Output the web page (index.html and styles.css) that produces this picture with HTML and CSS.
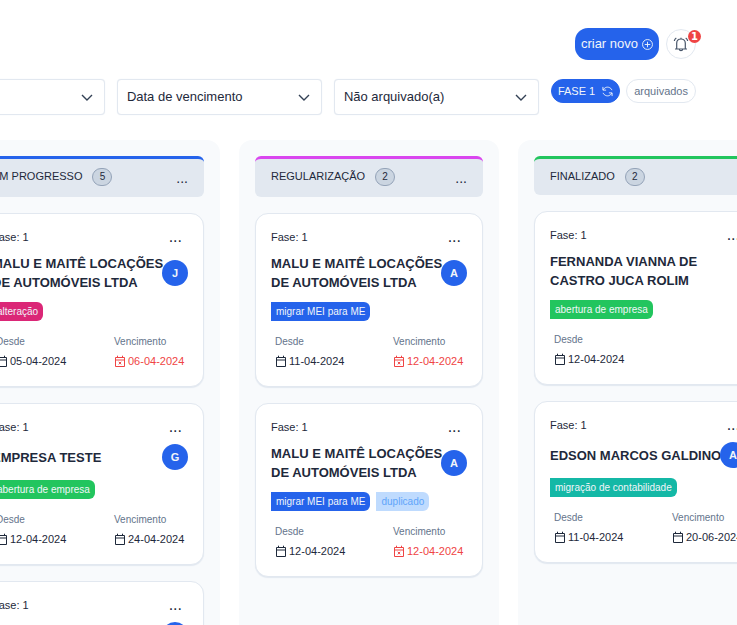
FILE: index.html
```html
<!DOCTYPE html>
<html lang="pt-BR">
<head>
<meta charset="utf-8">
<title>Processos</title>
<link rel="stylesheet" href="styles.css">
</head>
<body>
<svg class="sprite" aria-hidden="true">
  <symbol id="calendar" viewBox="0 0 12 12"><path d="M1.500 2.500h9v9h-9zM1.500 5h9M3.500 .7v2M8.500 .7v2" fill="none" stroke="currentColor"/></symbol>
  <symbol id="calendar-x" viewBox="0 0 12 12"><path d="M1.500 2.500h9v9h-9zM1.500 5h9M3.500 .7v2M8.500 .7v2M4.800 6.800l2.400 2.600M7.200 6.800l-2.400 2.600" fill="none" stroke="currentColor"/></symbol>
</svg>
<div class="page">
  <header class="topbar">
    <button class="create" type="button">criar novo
      <svg width="11" height="11" viewBox="0 0 12 12" fill="none" stroke="currentColor"><circle cx="6" cy="6" r="5.400"/><path d="M6 3v6M3 6h6"/></svg>
    </button>
    <button class="bell" type="button" aria-label="Notificações">
      <svg width="16" height="16" viewBox="0 0 16 16" fill="none" stroke="currentColor" stroke-width="1.200"><path d="M2 13h12M3.700 13V7.300C3.700 4.700 5.500 3 8 3s4.300 1.700 4.300 4.300V13M6.300 13.200c.2 2 3.200 2 3.400 0M8 1.700V3M1.300 5c.2-1.200.9-2.200 2-2.900M14.700 5c-.2-1.200-.9-2.200-2-2.900"/></svg>
      <span class="badge">1</span>
    </button>
  </header>

  <div class="filters">
    <div class="field"><select aria-label="Status"><option></option></select><svg class="chevron" width="12" height="8" viewBox="0 0 12 8"><path d="M1 1l5 5 5-5"/></svg></div>
    <div class="field"><select aria-label="Data de vencimento"><option>Data de vencimento</option></select><svg class="chevron" width="12" height="8" viewBox="0 0 12 8"><path d="M1 1l5 5 5-5"/></svg></div>
    <div class="field"><select aria-label="Arquivamento"><option>Não arquivado(a)</option></select><svg class="chevron" width="12" height="8" viewBox="0 0 12 8"><path d="M1 1l5 5 5-5"/></svg></div>
    <div class="pills">
      <button class="pill active" type="button">FASE 1
        <svg width="11" height="11" viewBox="0 0 12 12" fill="none" stroke="currentColor"><path d="M1 1v3.500h3.500M1.400 4.200C2.500 1.500 6.500 0 9.500 2.600c.6.500 1 1.100 1.300 1.900M11 11V7.500H7.500M10.600 7.800C9.500 10.500 5.500 12 2.500 9.400c-.6-.5-1-1.100-1.300-1.900"/></svg>
      </button>
      <button class="pill" type="button">arquivados</button>
    </div>
  </div>

  <main class="board">
    <section class="column">
      <div class="column-head blue"><h2>EM PROGRESSO</h2><span class="count">5</span><button class="more" type="button">...</button></div>
      <article class="card">
        <div class="card-top"><span>Fase: 1</span><button class="more" type="button">...</button></div>
        <div class="card-title"><h3>MALU E MAITÊ LOCAÇÕES<br>DE AUTOMÓVEIS LTDA</h3><span class="avatar">J</span></div>
        <div class="tags"><span class="tag pink">alteração</span></div>
        <dl class="dates">
          <div><dt>Desde</dt><dd><svg class="icon"><use href="#calendar"/></svg>05-04-2024</dd></div>
          <div><dt>Vencimento</dt><dd class="late"><svg class="icon"><use href="#calendar-x"/></svg>06-04-2024</dd></div>
        </dl>
      </article>
      <article class="card">
        <div class="card-top"><span>Fase: 1</span><button class="more" type="button">...</button></div>
        <div class="card-title"><h3>EMPRESA TESTE</h3><span class="avatar">G</span></div>
        <div class="tags"><span class="tag green">abertura de empresa</span></div>
        <dl class="dates">
          <div><dt>Desde</dt><dd><svg class="icon"><use href="#calendar"/></svg>12-04-2024</dd></div>
          <div><dt>Vencimento</dt><dd><svg class="icon"><use href="#calendar"/></svg>24-04-2024</dd></div>
        </dl>
      </article>
      <article class="card">
        <div class="card-top"><span>Fase: 1</span><button class="more" type="button">...</button></div>
        <div class="card-title"><h3></h3><span class="avatar"></span></div>
      </article>
    </section>

    <section class="column">
      <div class="column-head fuchsia"><h2>REGULARIZAÇÃO</h2><span class="count">2</span><button class="more" type="button">...</button></div>
      <article class="card">
        <div class="card-top"><span>Fase: 1</span><button class="more" type="button">...</button></div>
        <div class="card-title"><h3>MALU E MAITÊ LOCAÇÕES<br>DE AUTOMÓVEIS LTDA</h3><span class="avatar">A</span></div>
        <div class="tags"><span class="tag royal">migrar MEI para ME</span></div>
        <dl class="dates">
          <div><dt>Desde</dt><dd><svg class="icon"><use href="#calendar"/></svg>11-04-2024</dd></div>
          <div><dt>Vencimento</dt><dd class="late"><svg class="icon"><use href="#calendar-x"/></svg>12-04-2024</dd></div>
        </dl>
      </article>
      <article class="card">
        <div class="card-top"><span>Fase: 1</span><button class="more" type="button">...</button></div>
        <div class="card-title"><h3>MALU E MAITÊ LOCAÇÕES<br>DE AUTOMÓVEIS LTDA</h3><span class="avatar">A</span></div>
        <div class="tags"><span class="tag royal">migrar MEI para ME</span><span class="tag sky">duplicado</span></div>
        <dl class="dates">
          <div><dt>Desde</dt><dd><svg class="icon"><use href="#calendar"/></svg>12-04-2024</dd></div>
          <div><dt>Vencimento</dt><dd class="late"><svg class="icon"><use href="#calendar-x"/></svg>12-04-2024</dd></div>
        </dl>
      </article>
    </section>

    <section class="column">
      <div class="column-head emerald"><h2>FINALIZADO</h2><span class="count">2</span></div>
      <article class="card">
        <div class="card-top"><span>Fase: 1</span><button class="more" type="button">...</button></div>
        <div class="card-title"><h3>FERNANDA VIANNA DE<br>CASTRO JUCA ROLIM</h3></div>
        <div class="tags"><span class="tag green">abertura de empresa</span></div>
        <dl class="dates">
          <div><dt>Desde</dt><dd><svg class="icon"><use href="#calendar"/></svg>12-04-2024</dd></div>
        </dl>
      </article>
      <article class="card">
        <div class="card-top"><span>Fase: 1</span><button class="more" type="button">...</button></div>
        <div class="card-title"><h3>EDSON MARCOS GALDINO</h3><span class="avatar">A</span></div>
        <div class="tags"><span class="tag teal">migração de contabilidade</span></div>
        <dl class="dates">
          <div><dt>Desde</dt><dd><svg class="icon"><use href="#calendar"/></svg>11-04-2024</dd></div>
          <div><dt>Vencimento</dt><dd><svg class="icon"><use href="#calendar"/></svg>20-06-2024</dd></div>
        </dl>
      </article>
    </section>
  </main>
</div>
</body>
</html>
```
FILE: styles.css
```css
* { box-sizing: border-box; }

body {
  margin: 0;
  background: #fff;
  color: #1e293b;
  font: 11px/16px "Liberation Sans", Arial, sans-serif;
}

h2, h3, dl, dt, dd { margin: 0; font: inherit; }

button, select { font: inherit; color: inherit; margin: 0; }

button {
  display: flex;
  align-items: center;
  justify-content: center;
  border: 0;
  padding: 0;
  background: none;
  white-space: nowrap;
}

.sprite { display: none; }

.page {
  display: flex;
  flex-direction: column;
  height: 100vh;
  overflow: hidden;
}

.topbar {
  display: flex;
  justify-content: flex-end;
  align-items: center;
  gap: 7px;
  padding: 28px 41px 0 0;
}

.create {
  gap: 4px;
  height: 32px;
  padding: 0 6px;
  border-radius: 13px;
  background: #2563eb;
  color: #f1f5f9;
  font-size: 13px;
}

.bell {
  position: relative;
  width: 30px;
  height: 30px;
  border: 1px solid #e2e8f0;
  border-radius: 50%;
  color: #475569;
}

.badge {
  position: absolute;
  top: 0;
  right: -6px;
  width: 13px;
  height: 13px;
  border-radius: 50%;
  background: #ef4444;
  color: #fff;
  font-family: "DejaVu Sans", sans-serif;
  font-size: 10px;
  font-weight: bold;
  line-height: 13px;
}

.filters {
  display: flex;
  justify-content: flex-end;
  gap: 12px;
  padding: 19px 41px 0 0;
}

.field {
  position: relative;
  flex: none;
  width: 205px;
}

.field select {
  display: block;
  width: 100%;
  height: 36px;
  padding: 0 32px 0 9px;
  appearance: none;
  border: 1px solid #e2e8f0;
  border-radius: 4px;
  background: #fff;
  box-shadow: 0 0 1px #e2e8f0;
  font-size: 13px;
}

.chevron {
  position: absolute;
  top: 15px;
  right: 12px;
  fill: none;
  stroke: #334155;
  stroke-width: 1.400;
  pointer-events: none;
}

.pills {
  display: flex;
  flex: none;
  align-items: flex-start;
  gap: 6px;
}

.pill {
  height: 24px;
  padding: 0 7px;
  border: 1px solid #e2e8f0;
  border-radius: 12px;
  color: #64748b;
}

.pill.active {
  gap: 7px;
  padding: 0 6px;
  border-color: #2563eb;
  background: #2563eb;
  color: #f1f5f9;
}

.board {
  display: flex;
  flex: 1;
  gap: 19px;
  min-height: 0;
  margin: 25px 0 0 -40px;
}

.column {
  display: flex;
  flex: none;
  flex-direction: column;
  gap: 16px;
  width: 260px;
  padding: 16px 16px 0;
  border-radius: 13px 13px 0 0;
  background: #f8fafc;
}

.column-head {
  display: flex;
  flex: none;
  align-items: flex-start;
  gap: 10px;
  padding: 9px 16px;
  border-top: 3px solid;
  border-radius: 6px;
  background: #e2e8f0;
}

.column-head.blue { border-color: #2563eb; }
.column-head.fuchsia { border-color: #d946ef; }
.column-head.emerald { border-color: #22c55e; }

.count {
  min-width: 20px;
  height: 18px;
  border: 1px solid #94a3b8;
  border-radius: 9px;
  background: #cbd5e1;
  font-size: 10px;
  text-align: center;
}

.more {
  margin-left: auto;
  font-size: 14px;
  line-height: 20px;
}

.card {
  flex: none;
  padding: 15px 15px 17px;
  border: 1px solid #e2e8f0;
  border-radius: 13px;
  background: #fff;
  box-shadow: 0 1px 1px #e2e8f0;
}

.card-top {
  display: flex;
  align-items: center;
  height: 16px;
  margin-bottom: 9px;
}

.card-top .more {
  margin-right: 6px;
  font-size: 16px;
}

.card-title {
  display: flex;
  align-items: center;
  min-height: 26px;
}

.card-title h3 {
  flex: 1;
  min-width: 0;
  font-size: 13px;
  font-weight: bold;
  line-height: 19px;
  white-space: nowrap;
}

.avatar {
  flex: none;
  width: 26px;
  height: 26px;
  border-radius: 50%;
  background: #2563eb;
  color: #f1f5f9;
  font-weight: bold;
  line-height: 26px;
  text-align: center;
}

.tags {
  display: flex;
  gap: 6px;
  margin: 10px 0 14px;
}

.tag {
  padding: 0 5px;
  border-radius: 0 6px 6px 0;
  color: #f1f5f9;
  font-size: 10px;
  line-height: 19px;
}

.tag.pink { background: #db2777; }
.tag.green { background: #22c55e; }
.tag.royal { background: #2563eb; }
.tag.teal { background: #14b8a6; }
.tag.sky { background: #bfdbfe; color: #60a5fa; }

.dates {
  display: grid;
  grid-template-columns: 118px 1fr;
  padding-left: 4px;
}

.dates dt {
  margin-bottom: 4px;
  color: #64748b;
  font-size: 10px;
  line-height: 14px;
}

.dates dd {
  display: flex;
  align-items: center;
  gap: 2px;
  white-space: nowrap;
}

.dates .late { color: #ef4444; }

.icon {
  width: 12px;
  height: 12px;
}
```
